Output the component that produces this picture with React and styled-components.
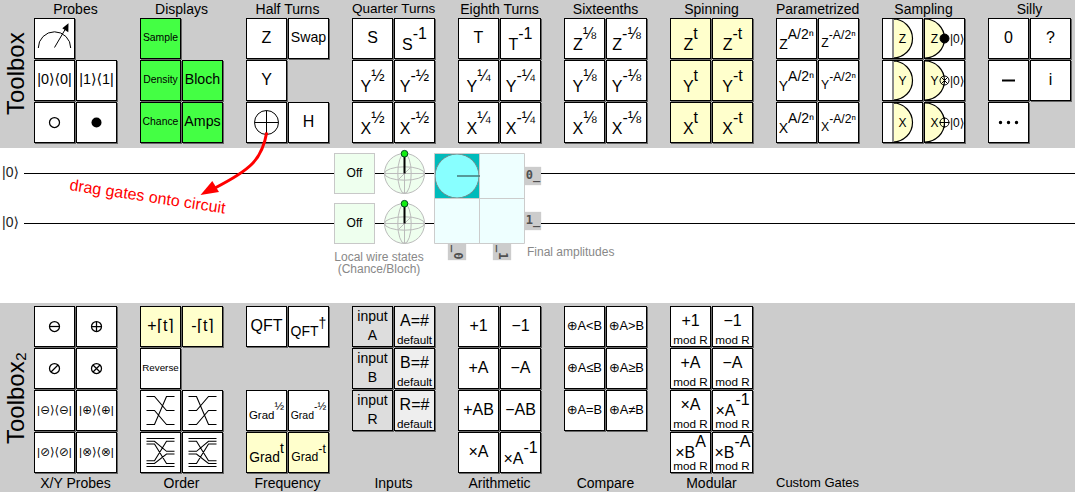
import React from "react";
import styled, { createGlobalStyle } from "styled-components";

const SANS = '"Liberation Sans", "DejaVu Sans", sans-serif';

const Global = createGlobalStyle`
  body { margin: 0; background: #fff; font-family: ${SANS}; color: #000; }
  * { box-sizing: border-box; }
`;

const Page = styled.main`
  position: relative;
  display: flex;
  flex-direction: column;
  width: 1075px;
  height: 492px;
  overflow: hidden;
`;

const Toolbox = styled.section`
  display: flex;
  flex: none;
  height: ${(p) => p.$height}px;
  background: #ccc;
`;

const ToolboxTitle = styled.h2`
  display: flex;
  align-items: center;
  justify-content: center;
  width: 32px;
  margin: 0 2px 0 0;
  font-size: 24px;
  font-weight: 400;
  line-height: 30px;
  white-space: nowrap;
  writing-mode: vertical-rl;
  transform: rotate(180deg);
`;

const Groups = styled.div`
  display: grid;
  grid-template-columns: repeat(10, 83px);
  column-gap: 23px;
`;

const Group = styled.div`
  display: flex;
  flex-direction: ${(p) => (p.$labelBelow ? "column-reverse" : "column")};
  justify-content: flex-end;
  padding-top: ${(p) => (p.$labelBelow ? 3 : 0)}px;
`;

const GroupLabel = styled.div`
  height: 18px;
  font-size: ${(p) => p.$size || 14}px;
  line-height: 18px;
  text-align: center;
  white-space: nowrap;
`;

const GateGrid = styled.div`
  display: grid;
  grid-template-columns: 41px 41px;
  grid-auto-rows: 41px;
  gap: 1px;
  height: ${(p) => p.$height}px;
`;

const Gate = styled.div`
  grid-column: ${(p) => p.$col};
  grid-row: ${(p) => p.$row};
  display: flex;
  flex-direction: column;
  align-items: center;
  border: 1px solid #000;
  background: ${(p) => p.$fill || "#fff"};
  box-shadow: 1px 1px 0 #666;
  white-space: nowrap;
  overflow: hidden;
`;

const Symbol = styled.span`
  font-size: ${(p) => p.$size || 16}px;
  line-height: ${(p) => p.$line || 37}px;
`;

const Power = styled.span`
  display: flex;
  align-items: flex-start;
  font-size: ${(p) => p.$size || 16}px;
  line-height: 18px;
  height: ${(p) => p.$height || 39}px;
`;

const Base = styled.span`
  padding-top: ${(p) => p.$top}px;
`;

const Exponent = styled.span`
  padding-top: ${(p) => p.$top}px;
`;

const Glyph = styled.svg`
  display: block;
  width: 39px;
  height: 39px;
  font-family: ${SANS};
`;

const Circuit = styled.section`
  display: grid;
  grid-template-columns: 434px 91px 1fr;
  grid-template-rows: 91px 1fr;
  flex: none;
  height: 155px;
  padding-top: 5px;
`;

const Wires = styled.div`
  display: flex;
  flex-direction: column;
  gap: 9px;
`;

const WireRow = styled.div`
  display: flex;
  align-items: center;
  height: 41px;
`;

const WireLabel = styled.span`
  width: 24px;
  padding: 0 0 3px 2px;
  font-size: 14px;
  line-height: 18px;
  color: #222;
`;

const Wire = styled.span`
  height: 1px;
  background: #000;
  ${(p) => (p.$width ? `width: ${p.$width}px;` : "flex: 1;")}
`;

const ChanceBox = styled.span`
  width: 41px;
  height: 41px;
  border: 1px solid #c8c8c8;
  background: #efe;
  font-size: 12px;
  line-height: 39px;
  text-align: center;
`;

const BlochSvg = styled.svg`
  display: block;
  width: 41px;
  height: 41px;
  overflow: visible;
`;

const AmpGrid = styled.svg`
  display: block;
  width: 91px;
  height: 91px;
`;

const Tag = styled.span`
  display: flex;
  align-items: center;
  justify-content: center;
  width: ${(p) => (p.$vertical ? 18 : 16)}px;
  height: ${(p) => (p.$vertical ? 16 : 18)}px;
  padding-bottom: ${(p) => (p.$vertical ? 0 : 1)}px;
  background: #ccc;
  box-shadow: 0 0 1px #ccc;
  color: #505050;
  font: bold 12px/17px "DejaVu Sans Mono", monospace;
  writing-mode: ${(p) => (p.$vertical ? "vertical-rl" : "horizontal-tb")};
`;

const ColumnTags = styled.div`
  display: flex;
  gap: 27px;
  padding-left: 14px;
`;

const TagRow = styled(WireRow)`
  align-items: flex-start;
  padding-top: ${(p) => p.$top}px;
`;

const TagWire = styled(Wire)`
  margin-top: ${(p) => p.$top}px;
`;

const Caption = styled.div`
  padding: ${(p) => p.$pad};
  color: #888;
  font-size: 12px;
  line-height: 12px;
  text-align: ${(p) => p.$align || "left"};
  white-space: pre-line;
`;

const Hint = styled.svg`
  position: absolute;
  left: 0;
  top: 0;
  width: 320px;
  height: 240px;
  pointer-events: none;
  font-family: ${SANS};
`;

const YELLOW = "#ffc";
const GREEN = "#4f4";

const text = (label, size, fill) => ({ fill, body: <Symbol $size={size}>{label}</Symbol> });

const power = (base, exp, size = 16, fill, top = [17, 6]) => ({
  fill,
  body: (
    <Power $size={size}>
      <Base $top={top[0]}>{base}</Base>
      <Exponent $top={top[1]}>{exp}</Exponent>
    </Power>
  ),
});

const stacked = (first, second, fill, sizes = [16, 11.7], lines = [27, 11]) => ({
  fill,
  body: (
    <>
      <Symbol $size={sizes[0]} $line={lines[0]}>{first}</Symbol>
      <Symbol $size={sizes[1]} $line={lines[1]}>{second}</Symbol>
    </>
  ),
});

const modPower = (base, exp, top) => ({
  body: (
    <>
      <Power $height={27}>
        <Base $top={top[0]}>{base}</Base>
        <Exponent $top={top[1]}>{exp}</Exponent>
      </Power>
      <Symbol $size={11.7} $line={11}>mod R</Symbol>
    </>
  ),
});

const glyph = (children, fill) => ({
  fill,
  body: (
    <Glyph viewBox="1 1 39 39" fill="none" stroke="#000">
      {children}
    </Glyph>
  ),
});

const meter = glyph(
  <>
    <path d="M4.3 30A16.2 16.2 0 0 1 36.7 30M20.5 29.5L32 10" />
    <path d="M34.5 5.3L28.3 10.3L34.3 14.3Z" fill="#000" stroke="none" />
  </>
);

const MARKS = {
  minus: "M-5 0H5",
  plus: "M-5 0H5M0 -5V5",
  slash: "M-3.5 3.5L3.5 -3.5",
  cross: "M-3.5 3.5L3.5 -3.5M-3.5 -3.5L3.5 3.5",
};

const control = (mark, filled) =>
  glyph(
    <g transform="translate(20.5 20.5)" strokeWidth={filled ? 0 : 1.25}>
      <circle r="5" fill={filled ? "#000" : "none"} />
      {mark && <path d={MARKS[mark]} />}
    </g>
  );

const notGate = glyph(
  <>
    <circle cx="20.5" cy="20.5" r="12" />
    <path d="M8.5 20.5H32.5M20.5 8.5V32.5" />
  </>
);

const detector = (letter) =>
  glyph(
    <>
      <path d="M11 1A19.5 19.5 0 0 1 11 40Z" fill={YELLOW} strokeWidth="1.2" />
      <path d="M11 1V40" stroke="#888" strokeWidth="2" />
      <text x="20.4" y="24.5" fontSize="12" textAnchor="middle" fill="#000" stroke="none">{letter}</text>
    </>
  );

const resetGate = (letter, mark) =>
  glyph(
    <>
      <path d="M1 1A19.5 19.5 0 0 1 1 40Z" fill={YELLOW} stroke="none" />
      <path d="M1 1A19.5 19.5 0 0 1 1 40" strokeWidth="1.2" />
      <text x="10.4" y="24.5" fontSize="12" textAnchor="middle" fill="#000" stroke="none">{letter}</text>
      <text x="26" y="24.5" fontSize="12" fill="#000" stroke="none">|0⟩</text>
      <g transform="translate(20.5 20.5)">
        <circle r="4.5" fill={mark ? "none" : "#000"} />
        {mark && <path d={MARKS[mark]} />}
      </g>
    </>
  );

const permutation = (pairs) =>
  glyph(<path d={pairs.map(([a, b]) => `M6.5 ${a}H14.5L26.5 ${b}H34.5`).join("")} strokeWidth="1.1" />);

const OUTER = [6.5, 9.3, 12, 28.8, 31.5, 34.5];
const INNER = [6.5, 9.3, 19.3, 22, 31.5, 34.5];
const SPREAD = [0, 2, 4, 1, 3, 5];
const interleave = SPREAD.map((to, from) => [OUTER[from], INNER[to]]);

const TOP_GROUPS = [
  { label: "Probes", gates: [meter, null, text("|0⟩⟨0|", 14.4), text("|1⟩⟨1|", 14.4), control(), control(null, true)] },
  {
    label: "Displays",
    gates: [text("Sample", 10.4, GREEN), null, text("Density", 10.4, GREEN), text("Bloch", 14.2, GREEN), text("Chance", 10.4, GREEN), text("Amps", 14.2, GREEN)],
  },
  { label: "Half Turns", gates: [text("Z"), text("Swap", 14.2), text("Y"), null, notGate, text("H")] },
  {
    label: "Quarter Turns",
    size: 13.5,
    gates: [text("S"), power("S", "-1"), power("Y", "½"), power("Y", "-½"), power("X", "½"), power("X", "-½")],
  },
  {
    label: "Eighth Turns",
    gates: [text("T"), power("T", "-1"), power("Y", "¼"), power("Y", "-¼"), power("X", "¼"), power("X", "-¼")],
  },
  {
    label: "Sixteenths",
    gates: [power("Z", "⅛"), power("Z", "-⅛"), power("Y", "⅛"), power("Y", "-⅛"), power("X", "⅛"), power("X", "-⅛")],
  },
  {
    label: "Spinning",
    gates: ["Z", "Y", "X"].flatMap((b) => [power(b, "t", 16, YELLOW), power(b, "-t", 16, YELLOW)]),
  },
  {
    label: "Parametrized",
    gates: ["Z", "Y", "X"].flatMap((b) => [power(b, "A/2ⁿ", 14, null, [16, 6]), power(b, "-A/2ⁿ", 12.2, null, [15, 7])]),
  },
  {
    label: "Sampling",
    gates: [detector("Z"), resetGate("Z"), detector("Y"), resetGate("Y", "cross"), detector("X"), resetGate("X", "plus")],
  },
  {
    label: "Silly",
    gates: [
      text("0"),
      text("?"),
      glyph(<path d="M14 20.5H27" strokeWidth="2" />),
      text("i"),
      glyph(<path d="M12.5 20.5h.01M20.5 20.5h.01M28.5 20.5h.01" strokeWidth="3.4" strokeLinecap="round" />),
    ],
  },
];

const BOTTOM_GROUPS = [
  {
    label: "X/Y Probes",
    gates: [
      control("minus"), control("plus"), control("slash"), control("cross"),
      text("|⊖⟩⟨⊖|", 11.7), text("|⊕⟩⟨⊕|", 11.7), text("|⊘⟩⟨⊘|", 11.7), text("|⊗⟩⟨⊗|", 11.7),
    ],
  },
  {
    label: "Order",
    gates: [
      text("+⌈t⌉", 16, YELLOW), text("-⌈t⌉", 16, YELLOW), text("Reverse", 9.8), null,
      permutation([[6.5, 20.5], [20.5, 34.5], [34.5, 6.5]]),
      permutation([[6.5, 34.5], [20.5, 6.5], [34.5, 20.5]]),
      permutation(interleave),
      permutation(interleave.map(([a, b]) => [b, a])),
    ],
  },
  {
    label: "Frequency",
    gates: [
      text("QFT", 16), power("QFT", "†", 14, null, [15, 7]), null, null,
      power("Grad", "½", 11.5, null, [15, 6]), power("Grad", "-½", 10.5, null, [15, 6]),
      power("Grad", "t", 13.8, YELLOW, [16, 7]), power("Grad", "-t", 12.2, YELLOW, [15, 7]),
    ],
  },
  {
    label: "Inputs",
    gates: ["A", "B", "R"].flatMap((v) => [
      stacked("input", v, "#ddd", [14, 14], [19, 19]),
      stacked(`${v}=#`, "default", "#eee"),
    ]),
  },
  {
    label: "Arithmetic",
    gates: [text("+1"), text("−1"), text("+A"), text("−A"), text("+AB"), text("−AB"), text("×A"), power("×A", "-1")],
  },
  {
    label: "Compare",
    gates: ["<", ">", "≤", "≥", "=", "≠"].map((op) => text(`⊕A${op}B`, 12.8)),
  },
  {
    label: "Modular",
    gates: [
      stacked("+1", "mod R"), stacked("−1", "mod R"), stacked("+A", "mod R"), stacked("−A", "mod R"),
      stacked("×A", "mod R"), modPower("×A", "-1", [11, 0]), modPower("×B", "A", [11, 0]), modPower("×B", "-A", [11, 0]),
    ],
  },
  { label: "Custom Gates", size: 13, gates: [] },
];

function GateGroup({ group, labelBelow }) {
  return (
    <Group $labelBelow={labelBelow}>
      <GroupLabel $size={group.size}>{group.label}</GroupLabel>
      <GateGrid $height={labelBelow ? 168 : 130}>
        {group.gates.map(
          (gate, i) =>
            gate && (
              <Gate key={i} $col={(i % 2) + 1} $row={Math.floor(i / 2) + 1} $fill={gate.fill}>
                {gate.body}
              </Gate>
            )
        )}
      </GateGrid>
    </Group>
  );
}

function Bloch() {
  return (
    <BlochSvg viewBox="0 0 41 41" fill="none" stroke="#bbb">
      <circle cx="20.5" cy="20.5" r="20" fill="#efe" />
      <ellipse cx="20.5" cy="20.5" rx="20" ry="6.7" />
      <ellipse cx="20.5" cy="20.5" rx="6.7" ry="20" />
      <path d="M.5 20.5H40.5M20.5 .5V40.5M15 26L26 15" />
      <path d="M20.5 20.5V1" stroke="#000" strokeWidth="2" />
      <circle cx="20.5" cy="0.7" r="3.3" fill="#1e1" stroke="#042" />
    </BlochSvg>
  );
}

function WireLine() {
  return (
    <WireRow>
      <WireLabel>|0⟩</WireLabel>
      <Wire />
      <ChanceBox>Off</ChanceBox>
      <Wire $width={9} />
      <Bloch />
      <Wire $width={9} />
    </WireRow>
  );
}

export default function App() {
  return (
    <Page>
      <Global />
      <Toolbox $height={148}>
        <ToolboxTitle>Toolbox</ToolboxTitle>
        <Groups>
          {TOP_GROUPS.map((g) => (
            <GateGroup key={g.label} group={g} />
          ))}
        </Groups>
      </Toolbox>

      <Circuit>
        <Wires>
          <WireLine />
          <WireLine />
        </Wires>
        <AmpGrid viewBox="0 0 91 91" fill="none">
          <rect x=".5" y=".5" width="90" height="90" fill="#eff" />
          <rect x=".5" y=".5" width="45" height="45" fill="#0bb" />
          <circle cx="23" cy="23" r="22" fill="#8ff" stroke="#788" />
          <path d="M.5 .5H90.5V90.5H.5ZM.5 45.5H90.5M45.5 .5V90.5" stroke="#ccc" />
          <path d="M23 23H46" stroke="#477" strokeWidth="1.5" />
        </AmpGrid>
        <Wires>
          <TagRow $top={14}>
            <Tag>0_</Tag>
            <TagWire $top={6} />
          </TagRow>
          <TagRow $top={9}>
            <Tag>1_</Tag>
            <TagWire $top={11} />
          </TagRow>
        </Wires>
        <Caption $pad="7px 0 0 324px" $align="center">{"Local wire states\n(Chance/Bloch)"}</Caption>
        <ColumnTags>
          <Tag $vertical>_0</Tag>
          <Tag $vertical>_1</Tag>
        </ColumnTags>
        <Caption $pad="2px 0 0 2px">Final amplitudes</Caption>
      </Circuit>

      <Toolbox $height={189}>
        <ToolboxTitle>Toolbox₂</ToolboxTitle>
        <Groups>
          {BOTTOM_GROUPS.map((g) => (
            <GateGroup key={g.label} group={g} labelBelow />
          ))}
        </Groups>
      </Toolbox>

      <Hint viewBox="0 0 320 240">
        <path d="M266.7 132.5C262 160 250 170 215 188" fill="none" stroke="#f00" strokeWidth="3" />
        <path d="M200.5 195L212.3 181L219 192Z" fill="#f00" />
        <text transform="translate(69 190) rotate(8.6)" fontSize="16" fill="#f00">
          drag gates onto circuit
        </text>
      </Hint>
    </Page>
  );
}
